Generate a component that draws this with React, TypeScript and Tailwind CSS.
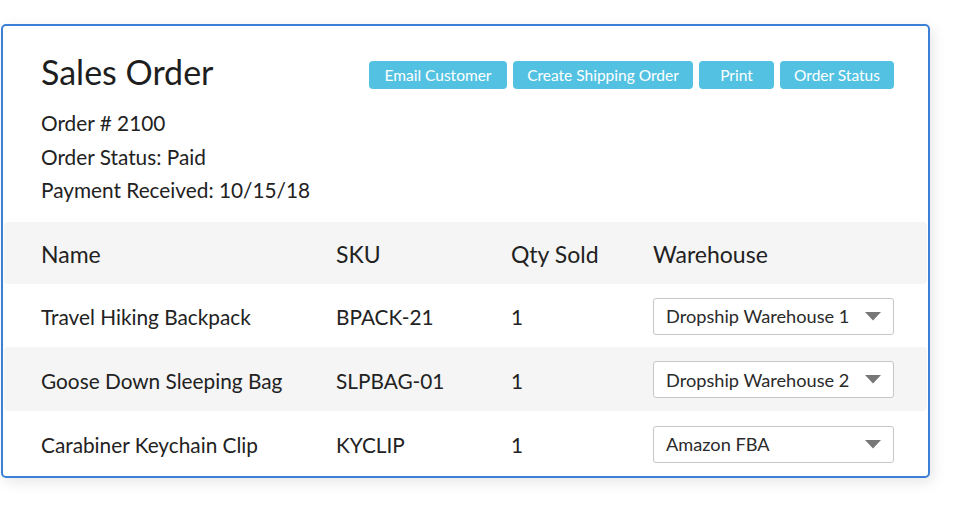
import React from "react";

const rows = [
  { name: "Travel Hiking Backpack", sku: "BPACK-21", qty: "1", wh: "Dropship Warehouse 1", h: "h-[63px]", gray: false },
  { name: "Goose Down Sleeping Bag", sku: "SLPBAG-01", qty: "1", wh: "Dropship Warehouse 2", h: "h-[64px]", gray: true },
  { name: "Carabiner Keychain Clip", sku: "KYCLIP", qty: "1", wh: "Amazon FBA", h: "h-[65px]", gray: false },
];

const buttons = [
  { label: "Email Customer", w: "w-[138px]" },
  { label: "Create Shipping Order", w: "w-[180px]" },
  { label: "Print", w: "w-[75px]" },
  { label: "Order Status", w: "w-[114px]" },
];

function Select({ value }: { value: string }) {
  return (
    <div className="flex h-[37px] w-[241px] items-center justify-between rounded-[3px] border border-[#c6c6c6] bg-white pl-[12px] pr-[12px]">
      <span className="pt-[2px] text-[18.2px] text-[#2a2a2a]">{value}</span>
      <svg width="16" height="9" viewBox="0 0 16 9">
        <path d="M0 0 H16 L8 8.5 Z" fill="#777" />
      </svg>
    </div>
  );
}

export default function App() {
  return (
    <div className="h-[510px] w-[960px] bg-white pl-[1px] pt-[24px]" style={{ fontFamily: "Lato, 'Noto Sans', sans-serif" }}>
      <div className="flex h-[454px] w-[929px] flex-col rounded-[5px] border-2 border-[#3b80d6] bg-white px-px shadow-[3px_4px_14px_rgba(0,0,0,0.10)]">
        <div className="flex items-start justify-between pl-[37px] pr-[33px] pt-[26px]">
          <h1 className="text-[34px] leading-[40px] text-[#1e1e1e]">Sales Order</h1>
          <div className="mt-[9px] flex gap-[6px]">
            {buttons.map((b) => (
              <button
                key={b.label}
                className={`h-[28px] ${b.w} rounded-[4px] bg-[#53c2e2] pt-[1px] text-center text-[15.5px] text-white`}
              >
                {b.label}
              </button>
            ))}
          </div>
        </div>
        <div className="mt-[14px] pl-[37px] text-[20.8px] leading-[33.5px] text-[#222]">
          <div>Order # 2100</div>
          <div>Order Status: Paid</div>
          <div>Payment Received: 10/15/18</div>
        </div>
        <div className="mt-[15px] grid h-[62px] grid-cols-[295px_175px_142px_241px] items-center rounded-[4px] bg-[#f5f5f5] pl-[37px] pt-[3px] text-[23px] text-[#222]">
          <div>Name</div>
          <div>SKU</div>
          <div>Qty Sold</div>
          <div>Warehouse</div>
        </div>
        {rows.map((r) => (
          <div
            key={r.sku}
            className={`grid ${r.h} grid-cols-[295px_175px_142px_241px] items-center rounded-[4px] pl-[37px] text-[20.8px] text-[#222] ${r.gray ? "bg-[#f5f5f5]" : "bg-white"}`}
          >
            <div className="pt-[4px]">{r.name}</div>
            <div className="pt-[4px]">{r.sku}</div>
            <div className="pt-[4px]">{r.qty}</div>
            <div className="pt-[2px]">
              <Select value={r.wh} />
            </div>
          </div>
        ))}
      </div>
    </div>
  );
}
